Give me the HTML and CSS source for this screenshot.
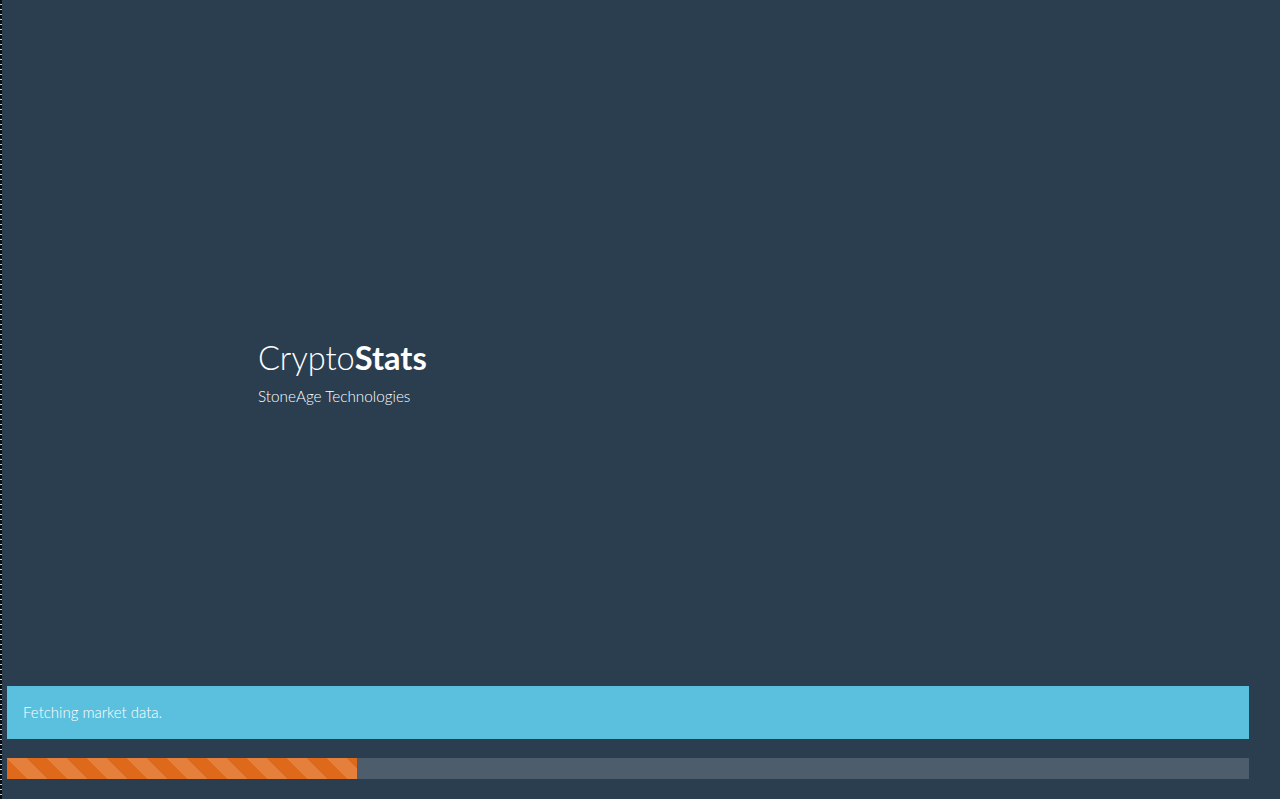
FILE: index.html
```html
<!DOCTYPE html>
<html lang="en">
<head>
<meta charset="utf-8">
<title>CryptoStats</title>
<link rel="stylesheet" href="styles.css">
</head>
<body>
<div class="edge"></div>
<div class="page">
  <main class="main">
    <div class="brand">
      <h1 class="title">Crypto<strong>Stats</strong></h1>
      <p class="subtitle">StoneAge Technologies</p>
    </div>
  </main>
  <div class="alert">Fetching market data.</div>
  <div class="progress">
    <div class="progress-bar" style="width: 350px"></div>
  </div>
</div>
</body>
</html>
```

FILE: styles.css
```css
* { box-sizing: border-box; }
html, body {
  margin: 0;
  height: 100%;
}
body {
  background: #2b3e50;
  color: #ebebeb;
  font-family: Lato, "Open Sans", sans-serif;
  overflow: hidden;
}
.edge {
  position: fixed;
  left: 0;
  top: 0;
  width: 2px;
  height: 100%;
  background: repeating-linear-gradient(to bottom, #0a0f14 0 4px, #c8c8c8 4px 5px);
}
.page {
  height: 100vh;
  display: flex;
  flex-direction: column;
  padding: 0 31px 20px 7px;
}
.main {
  flex: 1;
  padding: 340px 0 0 251px;
}
.title {
  margin: 0;
  font-size: 32.6px;
  line-height: 36px;
  font-weight: 300;
  color: #fff;
}
.title strong { font-weight: 700; }
.subtitle {
  margin: 10px 0 0;
  font-size: 15.3px;
  line-height: 21px;
  font-weight: 300;
  color: #fff;
}
.alert {
  height: 53px;
  background: #5bc0de;
  color: #fff;
  font-size: 15px;
  font-weight: 300;
  line-height: 21px;
  padding: 16px 16px;
  margin-bottom: 19px;
}
.progress {
  height: 21px;
  background: #4e5d6c;
  display: flex;
}
.progress-bar {
  height: 100%;
  background-color: #df691a;
  background-image: linear-gradient(45deg, rgba(255,255,255,.15) 25%, transparent 25%, transparent 50%, rgba(255,255,255,.15) 50%, rgba(255,255,255,.15) 75%, transparent 75%, transparent);
  background-size: 40px 40px;
}
```
